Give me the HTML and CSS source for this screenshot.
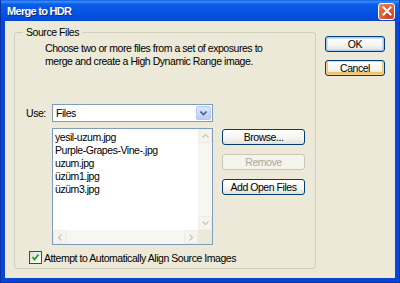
FILE: index.html
```html
<!DOCTYPE html>
<html>
<head>
<meta charset="utf-8">
<link rel="stylesheet" href="styles.css">
</head>
<body>
<div class="window">
  <div class="titlebar">
    <span class="title">Merge to HDR</span>
    <span class="close"><svg width="10" height="10" viewBox="0 0 10 10"><path d="M1.5 1.5 L8.5 8.5 M8.5 1.5 L1.5 8.5" stroke="#fff" stroke-width="2" stroke-linecap="square"/></svg></span>
  </div>
  <div class="client">
    <fieldset class="group">
      <legend>Source Files</legend>
      <p class="desc">Choose two or more files from a set of exposures to<br>merge and create a High Dynamic Range image.</p>
      <div class="use-row">
        <span class="use-label">Use:</span>
        <div class="select">
          <span class="select-value">Files</span>
          <span class="select-btn"><svg width="7" height="5" viewBox="0 0 7 5"><path d="M0.5 0.5 L3.5 3.5 L6.5 0.5" fill="none" stroke="#4d6185" stroke-width="1.6"/></svg></span>
        </div>
      </div>
      <div class="files-row">
        <div class="listbox">
          <div class="list-main">
            <ul class="items">
              <li>yesil-uzum.jpg</li>
              <li>Purple-Grapes-Vine-.jpg</li>
              <li>uzum.jpg</li>
              <li>üzüm1.jpg</li>
              <li>üzüm3.jpg</li>
            </ul>
            <div class="vscroll">
              <span class="sarrow"><svg width="7" height="4" viewBox="0 0 7 4"><path d="M0.5 3.5 L3.5 0.5 L6.5 3.5" fill="none" stroke="#c9c7ba" stroke-width="1.3"/></svg></span>
              <span class="sarrow"><svg width="7" height="4" viewBox="0 0 7 4"><path d="M0.5 0.5 L3.5 3.5 L6.5 0.5" fill="none" stroke="#c9c7ba" stroke-width="1.3"/></svg></span>
            </div>
          </div>
          <div class="hscroll">
            <span class="sarrow"><svg width="4" height="7" viewBox="0 0 4 7"><path d="M3.5 0.5 L0.5 3.5 L3.5 6.5" fill="none" stroke="#c9c7ba" stroke-width="1.3"/></svg></span>
            <span class="sarrow"><svg width="4" height="7" viewBox="0 0 4 7"><path d="M0.5 0.5 L3.5 3.5 L0.5 6.5" fill="none" stroke="#c9c7ba" stroke-width="1.3"/></svg></span>
            <span class="corner"></span>
          </div>
        </div>
        <div class="side-buttons">
          <button class="btn wide">Browse...</button>
          <button class="btn wide disabled">Remove</button>
          <button class="btn wide">Add Open Files</button>
        </div>
      </div>
      <label class="check-row">
        <span class="checkbox"><svg width="9" height="9" viewBox="0 0 9 9"><path d="M1.5 4 L3.5 6.5 L7.5 1.5" fill="none" stroke="#21a121" stroke-width="1.8"/></svg></span>
        <span>Attempt to Automatically Align Source Images</span>
      </label>
    </fieldset>
    <div class="main-buttons">
      <button class="btn main focus">OK</button>
      <button class="btn main cancel">Cancel</button>
    </div>
  </div>
</div>
</body>
</html>
```

FILE: styles.css
```css
* { box-sizing: border-box; }
html, body { margin: 0; padding: 0; }
body {
  width: 400px;
  height: 283px;
  overflow: hidden;
  font-family: "Liberation Sans", Arial, sans-serif;
  font-size: 10.5px;
  letter-spacing: -0.45px;
  color: #000;
}
.window {
  width: 400px;
  height: 283px;
  background: #0a46d4;
  display: flex;
  flex-direction: column;
  padding: 0 4px 4px 4px;
  border: 1px solid #0831a8;
  border-top: none;
}
.titlebar {
  height: 21px;
  flex: none;
  margin: 0 -4px;
  padding: 0 4px 0 6px;
  display: flex;
  align-items: center;
  justify-content: space-between;
  background: linear-gradient(to bottom, #0a5ce8 0%, #3d8df5 8%, #0a5fe8 20%, #0553e0 60%, #0548d4 100%);
}
.title {
  color: #fff;
  font-family: "Liberation Sans", Arial, sans-serif;
  font-weight: bold;
  font-size: 11px;
  letter-spacing: -0.7px;
  text-shadow: 1px 1px 0 #0a2a8a;
}
.close {
  width: 17px;
  height: 17px;
  border: 1px solid #fff;
  border-radius: 3px;
  background: radial-gradient(circle at 70% 75%, #c8411a 0%, #e0643a 55%, #f08a66 100%);
  display: flex;
  align-items: center;
  justify-content: center;
  margin-top: 1px;
}
.close svg { display: block; }
.client {
  flex: 1;
  min-height: 0;
  background: #ece9d8;
  display: flex;
  align-items: flex-start;
  padding: 5px 0 0 9px;
  gap: 9px;
}
.group {
  margin: 0;
  width: 302px;
  height: 243px;
  flex: none;
  border: 1px solid #d0d0bf;
  border-radius: 3px;
  padding: 0 0 0 11px;
  display: flex;
  flex-direction: column;
}
.group legend {
  padding: 0 3px;
  margin-left: -3px;
  line-height: 13px;
}
.desc {
  margin: 3px 0 0 19px;
  line-height: 13px;
  white-space: nowrap;
}
.use-row {
  display: flex;
  align-items: center;
  margin-top: 36px;
}
.use-label {
  width: 26px;
}
.select {
  width: 161px;
  height: 18px;
  background: #fff;
  border: 1px solid #7f9db9;
  display: flex;
  align-items: center;
  justify-content: space-between;
  padding: 1px 1px 1px 3px;
}
.select-btn {
  width: 15px;
  height: 14px;
  border-radius: 2px;
  background: linear-gradient(to bottom, #dbe6fd, #b9cdf7);
  border: 1px solid #b4c8f6;
  display: flex;
  align-items: center;
  justify-content: center;
}
.select-btn svg, .sarrow svg { display: block; }
.files-row {
  display: flex;
  align-items: flex-start;
  margin: 6px 0 0 26px;
  gap: 9px;
}
.listbox {
  width: 161px;
  height: 117px;
  border: 1px solid #7f9db9;
  background: #fff;
  display: flex;
  flex-direction: column;
}
.list-main {
  flex: 1;
  min-height: 0;
  display: flex;
}
.items {
  flex: 1;
  list-style: none;
  margin: 0;
  padding: 2px 0 0 2px;
  line-height: 13px;
  white-space: nowrap;
  overflow: hidden;
}
.vscroll {
  width: 14px;
  background: #f7f6f1;
  display: flex;
  flex-direction: column;
  justify-content: space-between;
}
.hscroll {
  height: 14px;
  flex: none;
  background: #f7f6f1;
  display: flex;
  align-items: stretch;
}
.hscroll .sarrow:nth-child(2) { margin-left: auto; }
.sarrow {
  width: 14px;
  height: 14px;
  border: 1px solid #eeede5;
  border-radius: 2px;
  background: #f5f4ee;
  display: flex;
  align-items: center;
  justify-content: center;
}
.corner {
  width: 14px;
  background: #ece9d8;
}
.side-buttons {
  display: flex;
  flex-direction: column;
  gap: 9px;
  padding-top: 1px;
}
.btn {
  font-family: inherit;
  font-size: inherit;
  letter-spacing: inherit;
  color: #000;
  height: 16px;
  padding: 0;
  border: 1px solid #003c74;
  border-radius: 3px;
  background: linear-gradient(to bottom, #ffffff 0%, #f4f4f0 60%, #e3e2da 100%);
  line-height: 13px;
  white-space: nowrap;
}
.btn.wide { width: 83px; }
.btn.disabled {
  color: #aca899;
  border-color: #c9c7ba;
  background: #f5f4ea;
}
.check-row {
  display: flex;
  align-items: center;
  gap: 2px;
  margin: 6px 0 0 3px;
}
.checkbox {
  width: 13px;
  height: 13px;
  border: 1px solid #1c5180;
  background: linear-gradient(135deg, #dcdcd7, #fff);
  display: flex;
  align-items: center;
  justify-content: center;
}
.checkbox svg { display: block; }
.main-buttons {
  display: flex;
  flex-direction: column;
  gap: 8px;
  padding-top: 10px;
}
.btn.main { width: 60px; height: 16px; }
.btn.focus { box-shadow: inset 0 0 0 1px #a9c6f5, inset 0 0 0 2px #cde0fb; }
.btn.cancel { box-shadow: inset 0 0 0 1px #f8d68e, inset 0 -1px 0 2px #f2c270; }
```
